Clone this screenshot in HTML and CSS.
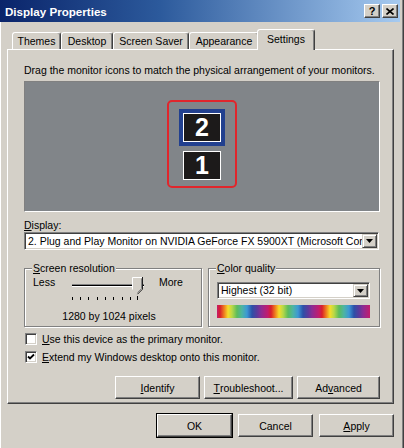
FILE: index.html
```html
<!DOCTYPE html>
<html>
<head>
<meta charset="utf-8">
<title>Display Properties</title>
<link rel="stylesheet" href="styles.css">
</head>
<body>
<div class="window">
  <div class="titlebar">
    <span class="title">Display Properties</span>
    <div class="caption-btns">
      <span class="cbtn cbtn-help">?</span>
      <span class="cbtn"><svg width="8" height="7" viewBox="0 0 8 7"><path d="M0.5 0.5 L7.5 6.5 M7.5 0.5 L0.5 6.5" stroke="#000" stroke-width="1.6"/></svg></span>
    </div>
  </div>
  <div class="main">
    <div class="tabs">
      <div class="tab tab-themes">Themes</div>
      <div class="tab tab-desktop">Desktop</div>
      <div class="tab tab-saver">Screen Saver</div>
      <div class="tab tab-appearance">Appearance</div>
      <div class="tab tab-settings active">Settings</div>
    </div>
    <div class="panel">
      <p class="hint">Drag the monitor icons to match the physical arrangement of your monitors.</p>
      <div class="monitors">
        <div class="selection">
          <div class="mon-frame"><div class="mon">2</div></div>
          <div class="mon">1</div>
        </div>
      </div>
      <div class="label"><u>D</u>isplay:</div>
      <div class="combo combo-display">
        <span class="combo-text">2. Plug and Play Monitor on NVIDIA GeForce FX 5900XT (Microsoft Corporation)</span>
        <span class="combo-btn"><svg width="7" height="4" viewBox="0 0 7 4"><polygon points="0,0 7,0 3.5,4" fill="#000"/></svg></span>
      </div>
      <div class="groups">
        <fieldset class="group group-res">
          <legend><u>S</u>creen resolution</legend>
          <div class="res-row">
            <span class="res-less">Less</span>
            <svg class="slider" width="80" height="26" viewBox="0 0 80 26">
              <rect x="0" y="8" width="72" height="1" fill="#808080"/>
              <rect x="0" y="9" width="72" height="1" fill="#000"/>
              <rect x="0" y="10" width="72" height="1" fill="#fff"/>
              <polygon points="60,1 71,1 71,13 66,18 60,13" fill="#d4d0c8"/>
              <polyline points="60.5,13.5 60.5,1.5 70.5,1.5" fill="none" stroke="#fff" stroke-width="1"/>
              <polyline points="70.5,1 70.5,13.2 65.5,18.2" fill="none" stroke="#202020" stroke-width="1"/>
              <polyline points="69.5,2.5 69.5,12.6 65.5,16.6" fill="none" stroke="#808080" stroke-width="1"/>
              <g fill="#000">
                <rect x="0" y="21" width="1" height="3"/>
                <rect x="8" y="21" width="1" height="3"/>
                <rect x="16" y="21" width="1" height="3"/>
                <rect x="25" y="21" width="1" height="3"/>
                <rect x="33" y="21" width="1" height="3"/>
                <rect x="41" y="21" width="1" height="3"/>
                <rect x="50" y="21" width="1" height="3"/>
                <rect x="58" y="21" width="1" height="3"/>
                <rect x="65" y="20" width="1" height="4"/>
              </g>
            </svg>
            <span class="res-more">More</span>
          </div>
          <div class="res-caption">1280 by 1024 pixels</div>
        </fieldset>
        <fieldset class="group group-color">
          <legend><u>C</u>olor quality</legend>
          <div class="combo combo-color">
            <span class="combo-text">Highest (32 bit)</span>
            <span class="combo-btn"><svg width="7" height="4" viewBox="0 0 7 4"><polygon points="0,0 7,0 3.5,4" fill="#000"/></svg></span>
          </div>
          <div class="spectrum"></div>
        </fieldset>
      </div>
      <div class="check-row check-first">
        <span class="checkbox"></span>
        <span><u>U</u>se this device as the primary monitor.</span>
      </div>
      <div class="check-row">
        <span class="checkbox"><svg width="8" height="8" viewBox="0 0 8 8"><path d="M1 3.5 L3 5.5 L7 1.5" fill="none" stroke="#000" stroke-width="1.8"/></svg></span>
        <span><u>E</u>xtend my Windows desktop onto this monitor.</span>
      </div>
      <div class="actions">
        <span class="btn btn-identify"><u>I</u>dentify</span>
        <span class="btn btn-trouble"><u>T</u>roubleshoot...</span>
        <span class="btn btn-advanced">Ad<u>v</u>anced</span>
      </div>
    </div>
    <div class="footer">
      <span class="btn btn-foot btn-default">OK</span>
      <span class="btn btn-foot">Cancel</span>
      <span class="btn btn-foot"><u>A</u>pply</span>
    </div>
  </div>
</div>
</body>
</html>
```

FILE: styles.css
```css
html, body {
  margin: 0;
  padding: 0;
  background: #d4d0c8;
}

body {
  font-family: "Liberation Sans", Arial, sans-serif;
  font-size: 10.5px;
  color: #000;
}

.window {
  width: 404px;
  height: 448px;
  box-sizing: border-box;
  background: #d4d0c8;
  padding-right: 4px;
  box-shadow: inset -1px 0 #404040, inset -2px 0 #808080, inset 1px 0 #ffffff;
  overflow: hidden;
}

.titlebar {
  height: 22px;
  box-sizing: border-box;
  display: flex;
  align-items: center;
  justify-content: space-between;
  padding: 0 2px 0 5px;
  background: linear-gradient(90deg, #0a246a 0%, #2c5a9c 40%, #a6caf0 100%);
}

.title {
  color: #fff;
  font-weight: bold;
  font-size: 11.6px;
}

.caption-btns {
  display: flex;
  gap: 2px;
}

.cbtn {
  width: 16px;
  height: 14px;
  box-sizing: border-box;
  background: #d4d0c8;
  border: 1px solid;
  border-color: #fff #404040 #404040 #fff;
  box-shadow: inset -1px -1px #808080;
  display: flex;
  align-items: center;
  justify-content: center;
}

.cbtn-help {
  font-weight: bold;
  font-size: 11px;
  line-height: 1;
}

.main {
  padding: 0 6px 0 7px;
}

.tabs {
  position: relative;
  z-index: 1;
  display: flex;
  align-items: flex-end;
  height: 20px;
  margin-top: 7px;
  padding-left: 5px;
}

.tab {
  box-sizing: border-box;
  height: 17px;
  border: 1px solid;
  border-bottom: none;
  border-color: #fff #404040 transparent #fff;
  box-shadow: inset -1px 0 #808080;
  border-radius: 3px 3px 0 0;
  display: flex;
  align-items: center;
  justify-content: center;
  background: #d4d0c8;
  white-space: nowrap;
}

.tab-themes { width: 49px; }
.tab-desktop { width: 52px; }
.tab-saver { width: 76px; }
.tab-appearance { width: 70px; }
.tab-settings { width: 54px; }

.tab.active {
  height: 21px;
  width: 58px;
  margin: 0 -2px -1px -2px;
  padding-bottom: 2px;
}

.panel {
  height: 355px;
  box-sizing: border-box;
  border: 1px solid;
  border-color: #fff #404040 #404040 #fff;
  box-shadow: inset -1px -1px #808080;
  padding: 0 13px 0 16px;
}

.hint {
  margin: 0;
  padding-top: 14px;
  line-height: 13px;
  white-space: nowrap;
}

.monitors {
  margin-top: 4px;
  height: 131px;
  box-sizing: border-box;
  border: 1px solid;
  border-color: #808080 #fff #fff #808080;
  background: #818589;
  display: flex;
  justify-content: center;
  align-items: flex-start;
  padding-top: 18px;
}

.selection {
  width: 70px;
  box-sizing: border-box;
  border: 2px solid #e0262c;
  border-radius: 5px;
  padding: 7px 0 6px;
  display: flex;
  flex-direction: column;
  align-items: center;
  gap: 5px;
}

.mon-frame {
  border: 4px solid #22408f;
}

.mon {
  width: 38px;
  height: 29px;
  box-sizing: border-box;
  border: 1px solid #fff;
  background: #1c1a1a;
  color: #fff;
  font-weight: bold;
  font-size: 25px;
  line-height: 27px;
  text-align: center;
}

.label {
  margin-top: 7px;
  line-height: 13px;
}

.combo {
  display: flex;
  align-items: stretch;
  box-sizing: border-box;
  background: #fff;
  border: 1px solid;
  border-color: #808080 #fff #fff #808080;
  box-shadow: inset 1px 1px #404040, inset -1px -1px #d4d0c8;
  padding: 1px;
}

.combo-display {
  width: 355px;
  height: 18px;
}

.combo-text {
  flex: 1;
  min-width: 0;
  overflow: hidden;
  white-space: nowrap;
  padding-left: 2px;
  line-height: 14px;
}

.combo-btn {
  flex: none;
  width: 15px;
  box-sizing: border-box;
  background: #d4d0c8;
  border: 1px solid;
  border-color: #d4d0c8 #404040 #404040 #d4d0c8;
  box-shadow: inset 1px 1px #fff, inset -1px -1px #808080;
  display: flex;
  align-items: center;
  justify-content: center;
}

.groups {
  display: flex;
  gap: 6px;
  margin-top: 12px;
}

.group {
  margin: 0;
  min-width: 0;
  flex: none;
  box-sizing: border-box;
  border: 1px solid #808080;
  box-shadow: inset 1px 1px #fff, 1px 1px #fff;
  padding: 0 8px;
}

.group legend {
  padding: 0 1px;
  margin-left: -1px;
  line-height: 13px;
  background: #d4d0c8;
}

.group-res {
  width: 178px;
  padding-top: 1px;
  padding-bottom: 3px;
}

.group-color {
  width: 172px;
}

.res-row {
  display: flex;
  align-items: flex-start;
  height: 26px;
  line-height: 13px;
}

.res-less {
  width: 39px;
}

.slider {
  display: block;
}

.res-more {
  margin-left: 7px;
}

.res-caption {
  margin-top: 8px;
  line-height: 13px;
  text-align: center;
  padding-right: 8px;
}

.combo-color {
  margin-top: 7px;
  width: 153px;
  height: 17px;
}

.combo-color .combo-text {
  padding-left: 2px;
  line-height: 13px;
}

.spectrum {
  margin-top: 6px;
  width: 153px;
  height: 13px;
  background: repeating-linear-gradient(90deg,
    #c41c6c 0px, #d8202c 3px, #ee7a20 7px, #f6dc2a 11px, #b8d848 15px,
    #5cbc5c 20px, #4cb4a4 25px, #3c98d4 30px, #2c50a8 35px, #5a3a9c 40px,
    #8c2c94 44px, #c41c6c 51px);
}

.check-row {
  display: flex;
  align-items: center;
  gap: 5px;
  height: 13px;
  margin-top: 5px;
  padding-left: 1px;
  white-space: nowrap;
}

.checkbox {
  width: 12px;
  height: 12px;
  box-sizing: border-box;
  background: #fff;
  border: 1px solid;
  border-color: #808080 #fff #fff #808080;
  box-shadow: inset 1px 1px #404040, inset -1px -1px #d4d0c8;
  display: flex;
  align-items: center;
  justify-content: center;
}

.actions {
  display: flex;
  justify-content: flex-end;
  gap: 4px;
  margin-top: 13px;
}

.btn {
  box-sizing: border-box;
  height: 23px;
  display: flex;
  align-items: center;
  justify-content: center;
  background: #d4d0c8;
  border: 1px solid;
  border-color: #fff #404040 #404040 #fff;
  box-shadow: inset -1px -1px #808080;
  white-space: nowrap;
}

.btn-identify { width: 85px; }
.btn-trouble { width: 89px; }
.btn-advanced { width: 83px; }

.footer {
  display: flex;
  justify-content: flex-end;
  gap: 6px;
  margin-top: 10px;
}

.btn-foot {
  width: 75px;
}

.btn-default {
  outline: 1px solid #000;
}
```
